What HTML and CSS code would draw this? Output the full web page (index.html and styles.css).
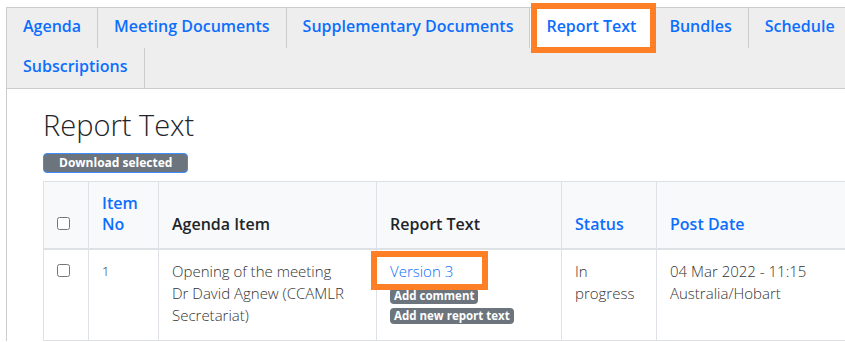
FILE: index.html
```html
<!doctype html>
<html>
  <head>
    <meta charset="utf-8" />
    <title>Report Text</title>
    <link rel="stylesheet" href="styles.css">
  </head>
  <body>
    <div class="page">
        <ul class="tabs">
            <li class="tab"><a href="#">Agenda</a></li>
            <li class="tab"><a href="#">Meeting Documents</a></li>
            <li class="tab"><a href="#">Supplementary Documents</a></li>
            <li class="tab active"><a href="#">Report Text</a></li>
            <li class="tab"><a href="#">Bundles</a></li>
            <li class="tab"><a href="#">Schedule</a></li>
            <li class="tab"><a href="#">Subscriptions</a></li>
        </ul>

        <div class="panel">
            <h2 class="panel-title">Report Text</h2>
            <button class="btn-download">Download selected</button>

            <table class="report-table">
                <colgroup>
                    <col class="col-check">
                    <col class="col-no">
                    <col class="col-item">
                    <col class="col-text">
                    <col class="col-status">
                    <col class="col-date">
                </colgroup>
                <thead>
                    <tr>
                        <th><input type="checkbox"></th>
                        <th><a href="#">Item No</a></th>
                        <th>Agenda Item</th>
                        <th>Report Text</th>
                        <th><a href="#">Status</a></th>
                        <th><a href="#">Post Date</a></th>
                    </tr>
                </thead>
                <tbody>
                    <tr>
                        <td><input type="checkbox"></td>
                        <td class="item-no">1</td>
                        <td>Opening of the meeting<br>Dr David Agnew (CCAMLR Secretariat)</td>
                        <td>
                            <a href="#" class="version">Version 3</a>
                            <span class="badge first">Add comment</span>
                            <span class="badge">Add new report text</span>
                        </td>
                        <td>In progress</td>
                        <td>04 Mar 2022 - 11:15<br>Australia/Hobart</td>
                    </tr>
                </tbody>
            </table>
        </div>
    </div>
  </body>
</html>
```

FILE: styles.css
```css
body {
    margin: 0;
    overflow: hidden;
    font-family: "Open Sans", "Liberation Sans", sans-serif;
    color: #212529;
    background: #fff;
}
a {
    color: #0d6efd;
    text-decoration: none;
}
.page {
    margin: 7px 0 0 6px;
    width: 900px;
    border-top: 1px solid #ccc;
    border-left: 1px solid #ccc;
}
.tabs {
    display: flex;
    flex-wrap: wrap;
    list-style: none;
    margin: 0;
    padding: 0;
    background: #eee;
    border-bottom: 1px solid #ccc;
}
.tab {
    border-right: 1px solid #ccc;
}
.tab a {
    display: block;
    padding: 8px 16px 12px;
    line-height: 20px;
    font-size: 16px;
    font-weight: 600;
}
.tab.active {
    position: relative;
    background: #fff;
}
.tab.active::after {
    content: "";
    position: absolute;
    left: 1px;
    right: -4px;
    top: -5px;
    height: 50px;
    border: 6px solid #ff7f27;
    box-sizing: border-box;
}
.panel {
    padding: 18px 0 0 36px;
}
.panel-title {
    margin: 0 0 10px;
    font-size: 29px;
    font-weight: 300;
    line-height: 36px;
}
.btn-download {
    display: block;
    height: 20px;
    padding: 0 15px;
    margin: 0 0 8px;
    background: #6c757d;
    border: 1px solid #3d8bfd;
    border-radius: 4px;
    color: #fff;
    font-family: inherit;
    font-size: 12px;
    font-weight: 700;
    line-height: 18px;
}
.report-table {
    border-collapse: collapse;
    table-layout: fixed;
    width: 843px;
    font-size: 15px;
    line-height: 22px;
}
.col-check { width: 45px; }
.col-no { width: 70px; }
.col-item { width: 218px; }
.col-text { width: 185px; }
.col-status { width: 95px; }
.col-date { width: 230px; }
.report-table th,
.report-table td {
    border: 1px solid #dee2e6;
    padding: 11px 13px 12px;
    text-align: left;
}
.report-table th {
    background: #f8f9fa;
    vertical-align: bottom;
    font-size: 16px;
    font-weight: 600;
    line-height: 21px;
    border-bottom-width: 2px;
    padding-bottom: 13px;
}
.report-table td {
    vertical-align: top;
    font-weight: 300;
    color: #333;
    padding-top: 10px;
    padding-bottom: 14px;
}
.report-table input {
    margin: 0;
    width: 13px;
    height: 13px;
}
.item-no {
    font-size: 13px;
}
.version {
    position: relative;
}
.version::after {
    content: "";
    position: absolute;
    left: -19px;
    top: -10px;
    width: 117px;
    height: 39px;
    border: 6px solid #ff7f27;
    box-sizing: border-box;
}
.badge {
    display: block;
    width: fit-content;
    margin-top: 4px;
    padding: 0 4px;
    height: 16px;
    line-height: 16px;
    background: #6c757d;
    border-radius: 4px;
    color: #fff;
    font-size: 11.5px;
    font-weight: 700;
}
.badge.first {
    margin-top: 6px;
}
```
